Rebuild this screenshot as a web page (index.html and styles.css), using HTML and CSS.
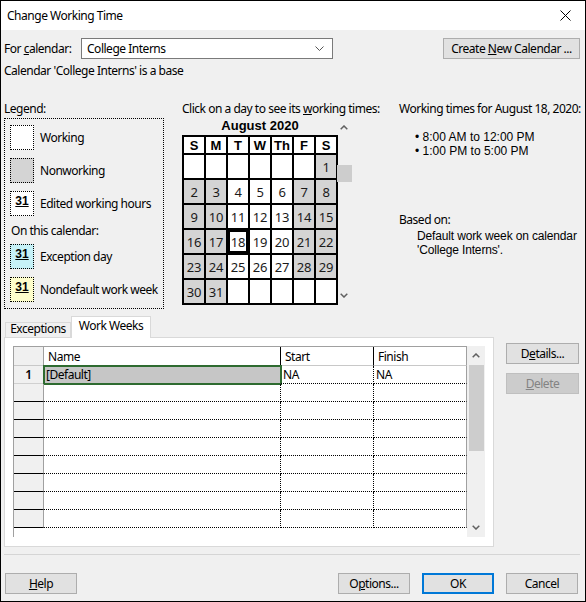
FILE: index.html
```html
<!DOCTYPE html>
<html lang="en">
<head>
    <meta charset="UTF-8">
    <title>Change Working Time</title>
    <link rel="stylesheet" href="styles.css">
</head>
<body>

<div class="dialog">
    <div class="titlebar">
        <span class="title">Change Working Time</span>
        <svg class="close" width="11" height="11" viewBox="0 0 11 11"><path d="M0.5 0.5 L10.5 10.5 M10.5 0.5 L0.5 10.5" stroke="#000" stroke-width="1" fill="none"/></svg>
    </div>

    <div class="content">
        <!-- calendar picker -->
        <div class="cal-row">
            <span class="cal-label">For <u>c</u>alendar:</span>
            <div class="combo">
                <span>College Interns</span>
                <svg width="9" height="5" viewBox="0 0 9 5"><path d="M0.5 0.5 L4.5 4.5 L8.5 0.5" stroke="#555" fill="none"/></svg>
            </div>
            <button class="btn btn-create">Create <u>N</u>ew Calendar ...</button>
        </div>
        <p class="base-note">Calendar 'College Interns' is a base</p>

        <div class="main">
            <!-- legend -->
            <div class="legend">
                <div class="heading">Legend:</div>
                <div class="legend-box">
                    <div class="legend-item"><span class="swatch"></span>Working</div>
                    <div class="legend-item"><span class="swatch sw-off"></span>Nonworking</div>
                    <div class="legend-item"><span class="swatch">31</span>Edited working hours</div>
                    <div class="legend-sub">On this calendar:</div>
                    <div class="legend-item"><span class="swatch sw-exc">31</span>Exception day</div>
                    <div class="legend-item"><span class="swatch sw-week">31</span>Nondefault work week</div>
                </div>
            </div>

            <!-- month view -->
            <div class="calendar">
                <div class="heading">Click on a day to see its <u>w</u>orking times:</div>
                <div class="cal-body">
                    <div class="cal-month">
                        <div class="month-title">August 2020</div>
                        <div class="days">
                            <span class="dow">S</span><span class="dow">M</span><span class="dow">T</span><span class="dow">W</span><span class="dow">Th</span><span class="dow">F</span><span class="dow">S</span>
                            <span></span><span></span><span></span><span></span><span></span><span></span><span class="off">1</span>
                            <span class="off">2</span><span class="off">3</span><span>4</span><span>5</span><span>6</span><span class="off">7</span><span class="off">8</span>
                            <span class="off">9</span><span class="off">10</span><span>11</span><span>12</span><span>13</span><span class="off">14</span><span class="off">15</span>
                            <span class="off">16</span><span class="off">17</span><span class="today">18</span><span>19</span><span>20</span><span class="off">21</span><span class="off">22</span>
                            <span class="off">23</span><span class="off">24</span><span>25</span><span>26</span><span>27</span><span class="off">28</span><span class="off">29</span>
                            <span class="off">30</span><span class="off">31</span><span></span><span></span><span></span><span></span><span></span>
                        </div>
                    </div>
                    <div class="cal-scroll">
                        <svg class="arr-up" width="8" height="5" viewBox="0 0 8 5"><path d="M0.7 4.3 L4 1 L7.3 4.3" stroke="#606060" stroke-width="1.5" fill="none"/></svg>
                        <div class="cal-thumb"></div>
                        <svg class="arr-down" width="8" height="5" viewBox="0 0 8 5"><path d="M0.7 0.7 L4 4 L7.3 0.7" stroke="#606060" stroke-width="1.5" fill="none"/></svg>
                    </div>
                </div>
            </div>

            <!-- details for selected day -->
            <div class="info">
                <div class="heading">Working times for August 18, 2020:</div>
                <ul class="times">
                    <li>• 8:00 AM to 12:00 PM</li>
                    <li>• 1:00 PM to 5:00 PM</li>
                </ul>
                <div class="based">Based on:</div>
                <div class="based-text">
                    <div>Default work week on calendar</div>
                    <div>'College Interns'.</div>
                </div>
            </div>
        </div>

        <!-- tabs -->
        <div class="tabs">
            <div class="tab tab-exc">Exceptions</div>
            <div class="tab tab-ww">Work Weeks</div>
        </div>
        <div class="tab-area">
            <div class="panel">
                <div class="sheet">
                    <div class="sheet-grid">
                        <div class="tr head">
                            <div class="c-rh"></div><div class="c-name">Name</div><div class="c-start">Start</div><div class="c-fin">Finish</div>
                        </div>
                        <div class="tr first">
                            <div class="c-rh">1</div><div class="c-name selected">[Default]</div><div class="c-start">NA</div><div class="c-fin">NA</div>
                        </div>
                        <div class="tr"><div class="c-rh"></div><div class="c-name"></div><div class="c-start"></div><div class="c-fin"></div></div>
                        <div class="tr"><div class="c-rh"></div><div class="c-name"></div><div class="c-start"></div><div class="c-fin"></div></div>
                        <div class="tr"><div class="c-rh"></div><div class="c-name"></div><div class="c-start"></div><div class="c-fin"></div></div>
                        <div class="tr"><div class="c-rh"></div><div class="c-name"></div><div class="c-start"></div><div class="c-fin"></div></div>
                        <div class="tr"><div class="c-rh"></div><div class="c-name"></div><div class="c-start"></div><div class="c-fin"></div></div>
                        <div class="tr"><div class="c-rh"></div><div class="c-name"></div><div class="c-start"></div><div class="c-fin"></div></div>
                        <div class="tr"><div class="c-rh"></div><div class="c-name"></div><div class="c-start"></div><div class="c-fin"></div></div>
                        <div class="tr"><div class="c-rh"></div><div class="c-name"></div><div class="c-start"></div><div class="c-fin"></div></div>
                    </div>
                    <div class="vscroll">
                        <svg width="8" height="5" viewBox="0 0 8 5"><path d="M0.7 4.3 L4 1 L7.3 4.3" stroke="#606060" stroke-width="1.5" fill="none"/></svg>
                        <div class="v-thumb"></div>
                        <svg class="v-down" width="8" height="5" viewBox="0 0 8 5"><path d="M0.7 0.7 L4 4 L7.3 0.7" stroke="#606060" stroke-width="1.5" fill="none"/></svg>
                    </div>
                </div>
            </div>
            <div class="side">
                <button class="btn">D<u>e</u>tails...</button>
                <button class="btn btn-disabled"><u>D</u>elete</button>
            </div>
        </div>

        <div class="sep"></div>

        <div class="footer">
            <button class="btn"><u>H</u>elp</button>
            <button class="btn btn-options">O<u>p</u>tions...</button>
            <button class="btn btn-ok">OK</button>
            <button class="btn btn-cancel">Cancel</button>
        </div>
    </div>
</div>

</body>
</html>
```

FILE: styles.css
```css
* {
    box-sizing: border-box;
}
body {
    margin: 0;
    font-family: "Noto Sans", sans-serif;
    font-size: 12px;
    letter-spacing: -0.48px;
    color: #000;
}
.dialog {
    width: 586px;
    height: 602px;
    border: 1px solid #000;
    background: #f0f0f0;
    overflow: hidden;
}
.titlebar {
    height: 29px;
    background: #fff;
    display: flex;
    align-items: center;
    padding: 0 14px 0 6px;
}
.titlebar .title {
    flex: 1;
}
.content {
    padding: 0 5px 0 3px;
}

/* top row */
.cal-row {
    display: flex;
    align-items: center;
    height: 21px;
    margin-top: 8px;
}
.cal-label {
    width: 77px;
}
.combo {
    width: 252px;
    height: 21px;
    border: 1px solid #7a7a7a;
    background: #fff;
    display: flex;
    align-items: center;
    justify-content: space-between;
    padding: 0 8px 0 5px;
}
.btn {
    font: inherit;
    letter-spacing: inherit;
    color: #000;
    height: 21px;
    background: #e1e1e1;
    border: 1px solid #adadad;
    padding: 0;
}
.btn-create {
    margin-left: auto;
    width: 137px;
}
.base-note {
    margin: 4px 0 0;
    height: 16px;
    line-height: 16px;
}

/* legend / month / info */
.main {
    display: flex;
    margin-top: 22px;
    height: 208px;
}
.heading {
    height: 16px;
    line-height: 16px;
    white-space: nowrap;
}
.legend {
    flex-shrink: 0;
    width: 160px;
    margin-right: 18px;
}
.legend-box {
    margin-top: 1px;
    height: 191px;
    border: 1px dotted #000;
    padding: 6px 0 0 5px;
}
.legend-item {
    display: flex;
    align-items: center;
    height: 25px;
    margin-bottom: 8px;
    white-space: nowrap;
}
.legend-sub {
    height: 16px;
    line-height: 16px;
    margin: -1px 0 5px 1px;
}
.swatch {
    flex-shrink: 0;
    width: 24px;
    height: 25px;
    margin-right: 6px;
    border: 1px dotted #000;
    background: #fff;
    padding-top: 2px;
    text-align: center;
    font-family: "Liberation Sans", sans-serif;
    font-weight: bold;
    font-size: 12px;
    line-height: 14px;
    letter-spacing: 0;
    text-decoration: underline;
}
.sw-off {
    background: #d4d4d4;
}
.sw-exc {
    background: #c6f1f7;
}
.sw-week {
    background: #fdfdcb;
}

.calendar {
    flex-shrink: 0;
    width: 217px;
}
.cal-body {
    display: flex;
}
.cal-month {
    width: 156px;
}
.month-title {
    height: 18px;
    line-height: 18px;
    text-align: center;
    font-family: "Liberation Sans", sans-serif;
    font-weight: bold;
    font-size: 13px;
    letter-spacing: 0;
}
.days {
    display: grid;
    grid-template-columns: repeat(7, 20px);
    grid-template-rows: 16px repeat(6, 23px);
    gap: 2px;
    padding: 2px;
    background: #000;
}
.days span {
    background: #fff;
    display: flex;
    align-items: center;
    justify-content: center;
    font-size: 13px;
    letter-spacing: -0.3px;
    color: #1a1a1a;
}
.days .dow {
    font-family: "Liberation Sans", sans-serif;
    font-weight: bold;
    font-size: 13px;
    letter-spacing: 0;
    color: #000;
}
.days .off {
    background: #d4d4d4;
}
.days .today {
    box-shadow: inset 0 0 0 2px #000;
}
.cal-scroll {
    width: 16px;
    margin-left: -2px;
    display: flex;
    flex-direction: column;
    align-items: center;
}
.arr-up {
    margin-top: 8px;
}
.cal-thumb {
    width: 15px;
    height: 17px;
    margin-top: 35px;
    background: #cdcdcd;
}
.arr-down {
    margin-top: auto;
    margin-bottom: 7px;
}

.info {
    flex: 1;
    min-width: 0;
}
.times {
    list-style: none;
    margin: 13px 0 0 16px;
    padding: 0;
    font-family: "Liberation Sans", sans-serif;
    letter-spacing: 0;
    line-height: 14px;
}
.based {
    margin-top: 54px;
    line-height: 16px;
}
.based-text {
    margin-top: 1px;
    padding-left: 18px;
    font-family: "Liberation Sans", sans-serif;
    letter-spacing: -0.15px;
    line-height: 14px;
    white-space: nowrap;
}

/* tabs */
.tabs {
    display: flex;
    align-items: flex-end;
    height: 21px;
    margin-top: 7px;
    padding-left: 1px;
}
.tab {
    border: 1px solid #d9d9d9;
    border-bottom: none;
    text-align: center;
}
.tab-exc {
    width: 66px;
    height: 15px;
    line-height: 11px;
}
.tab-ww {
    width: 80px;
    height: 22px;
    line-height: 18px;
    background: #fff;
    margin-bottom: -1px;
    position: relative;
    z-index: 1;
}
.tab-area {
    display: flex;
    align-items: flex-start;
}
.panel {
    width: 490px;
    height: 210px;
    background: #fff;
    border: 1px solid #d9d9d9;
    padding: 8px 0 0 8px;
}
.side {
    display: flex;
    flex-direction: column;
    gap: 9px;
    margin: 6px 0 0 12px;
}
.side .btn {
    width: 73px;
}
.btn-disabled {
    background: #cccccc;
    border-color: #bfbfbf;
    color: #838383;
}

/* work weeks sheet */
.sheet {
    display: flex;
    width: 472px;
    height: 191px;
    overflow: hidden;
}
.sheet-grid {
    width: 454px;
    border-top: 1px solid #a0a0a0;
    border-left: 1px solid #a0a0a0;
}
.tr {
    display: flex;
    height: 18px;
}
.tr > div {
    height: 100%;
    border-right: 1px dotted #000;
    border-bottom: 1px dotted #000;
    padding-left: 2px;
    line-height: 17px;
    white-space: nowrap;
}
.tr > .c-rh {
    width: 30px;
    padding-left: 0;
    text-align: center;
    background: #f0f0f0;
    border-right: 1px solid #a0a0a0;
    border-bottom: 1px solid #000;
}
.tr.first > .c-rh {
    border-bottom-color: #d0d0d0;
    font-weight: 600;
}
.c-name {
    width: 237px;
}
.c-start {
    width: 93px;
}
.tr > .c-fin {
    width: 93px;
    border-right: 1px solid #a0a0a0;
}
.tr.head {
    height: 19px;
}
.tr.head > div {
    background: #fff;
    border-right: 1px solid #000;
    border-bottom: 1px solid #c8c8c8;
    padding: 1px 0 0 4px;
}
.tr.head > .c-rh {
    background: #f0f0f0;
    border-right-color: #a0a0a0;
}
.tr.head > .c-fin {
    border-right-color: #a0a0a0;
}
.tr > .selected {
    background: #c6c6c6;
    outline: 2px solid #2e6b30;
    outline-offset: -1px;
}
.vscroll {
    width: 18px;
    background: #f0f0f0;
    display: flex;
    flex-direction: column;
    align-items: center;
    padding-top: 7px;
}
.v-thumb {
    width: 15px;
    height: 86px;
    margin: 7px 0 0 1px;
    background: #cdcdcd;
}
.v-down {
    margin-top: auto;
    margin-bottom: 7px;
}

/* footer */
.sep {
    margin-top: 7px;
    border-top: 1px solid #d5d5d5;
}
.footer {
    display: flex;
    margin-top: 18px;
    padding-left: 1px;
}
.footer .btn {
    width: 72px;
}
.btn-options {
    margin-left: auto;
}
.btn-ok {
    margin-left: 12px;
    border: 2px solid #0078d7;
}
.btn-cancel {
    margin: 0 2px 0 12px;
}
```
